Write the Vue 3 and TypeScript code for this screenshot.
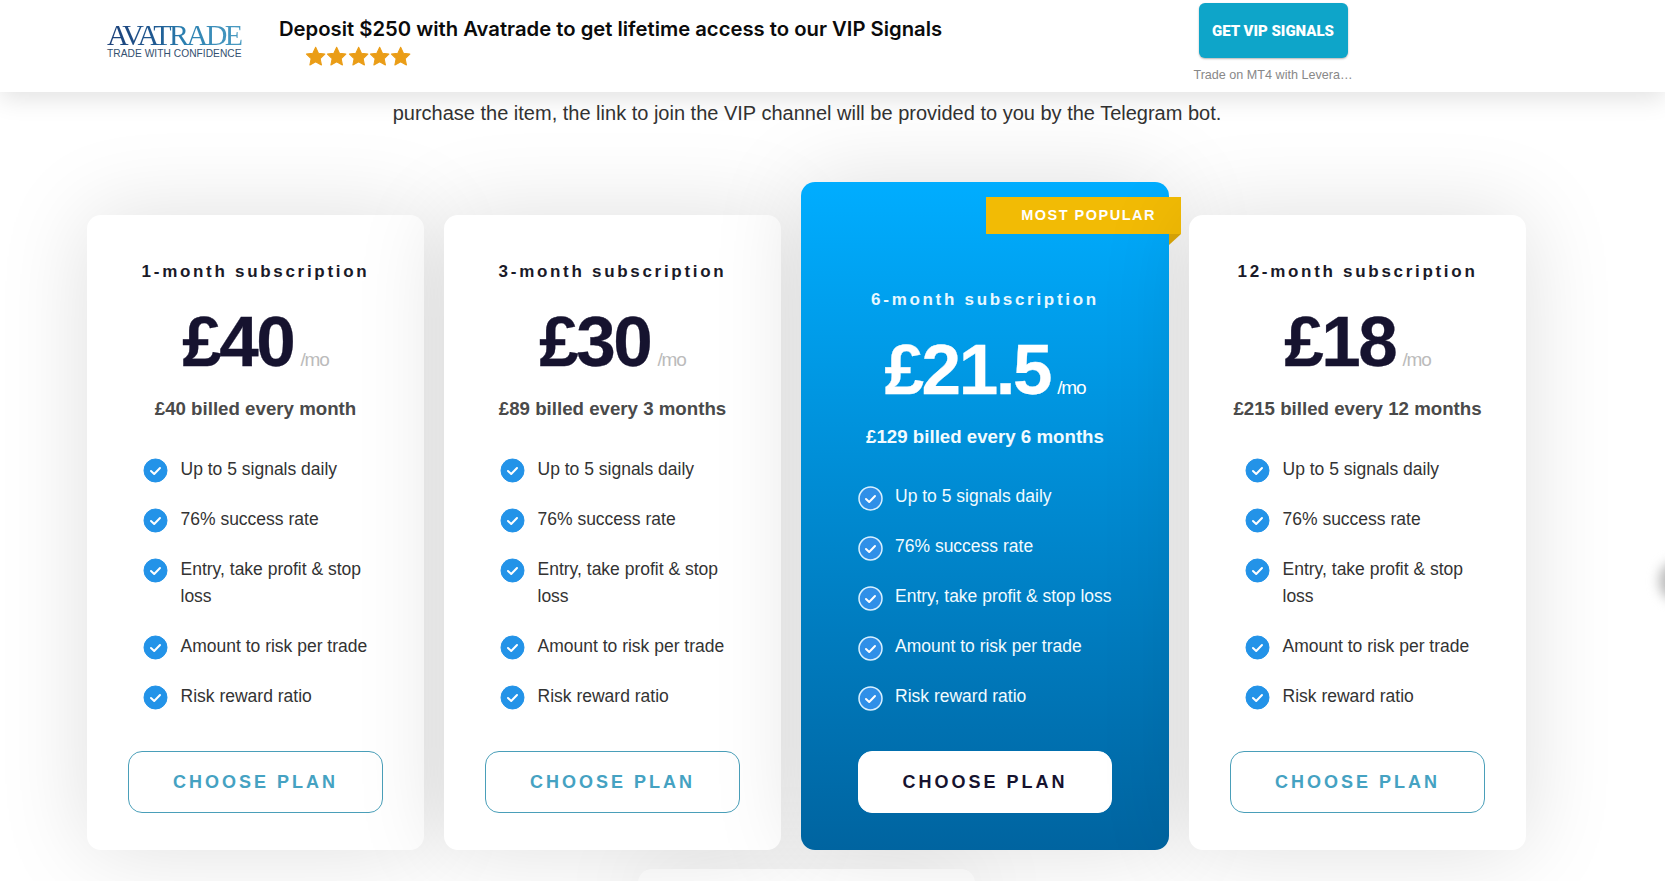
<script setup lang="ts">
interface Plan {
  name: string
  price: string
  billed: string
  featured?: boolean
}

const plans: Plan[] = [
  { name: '1-month subscription', price: '£40', billed: '£40 billed every month' },
  { name: '3-month subscription', price: '£30', billed: '£89 billed every 3 months' },
  { name: '6-month subscription', price: '£21.5', billed: '£129 billed every 6 months', featured: true },
  { name: '12-month subscription', price: '£18', billed: '£215 billed every 12 months' },
]

const features = [
  'Up to 5 signals daily',
  '76% success rate',
  'Entry, take profit & stop loss',
  'Amount to risk per trade',
  'Risk reward ratio',
]
</script>

<template>
  <div class="page">
    <header class="ad">
      <div class="logo">
        <div class="logo-name">AVATRADE</div>
        <div class="logo-tag">TRADE WITH CONFIDENCE</div>
      </div>
      <div class="pitch">
        <div class="headline">Deposit $250 with Avatrade to get lifetime access to our VIP Signals</div>
        <div class="stars">
          <svg v-for="n in 5" :key="n" class="star" viewBox="0 0 24 23">
            <path d="M12 1.500l3.200 6.800 7.400 1-5.400 5.100 1.400 7.400L12 18.300l-6.600 3.500 1.400-7.400-5.400-5.100 7.400-1z" fill="#ea9d17" stroke="#ea9d17" stroke-width="1.200" stroke-linejoin="round" />
          </svg>
        </div>
      </div>
      <div class="cta">
        <a class="cta-btn">GET VIP SIGNALS</a>
        <div class="cta-sub">Trade on MT4 with Levera…</div>
      </div>
    </header>

    <main class="content">
      <p class="intro">purchase the item, the link to join the VIP channel will be provided to you by the Telegram bot.</p>
      <section class="plans">
        <article v-for="plan in plans" :key="plan.name" class="card" :class="{ featured: plan.featured }">
          <div v-if="plan.featured" class="ribbon">MOST POPULAR</div>
          <h3 class="name">{{ plan.name }}</h3>
          <div class="price"><span class="amount">{{ plan.price }}</span><span class="per">/mo</span></div>
          <div class="billed">{{ plan.billed }}</div>
          <ul class="list">
            <li v-for="f in features" :key="f">
              <svg class="tick" viewBox="0 0 25 25">
                <circle cx="12.5" cy="12.500" r="11.500" class="disc" />
                <path d="M8 13l3.200 3 5.800-6" fill="none" stroke="#fff" stroke-width="2" stroke-linecap="round" stroke-linejoin="round" />
              </svg>
              <span>{{ f }}</span>
            </li>
          </ul>
          <a class="choose">CHOOSE PLAN</a>
        </article>
      </section>
      <div class="next-card"></div>
    </main>
    <div class="edge"></div>
  </div>
</template>

<style>
html, body { margin: 0; background: #fff; }
</style>

<style scoped>
.page {
  position: relative;
  height: 881px;
  overflow: hidden;
  background: #fff;
  font-family: "Liberation Sans", Arial, sans-serif;
}
.ad {
  position: relative;
  z-index: 3;
  box-sizing: border-box;
  height: 92px;
  background: #fff;
  box-shadow: 0 6px 24px rgba(0, 0, 0, 0.12);
  display: flex;
  padding-left: 107px;
}
.logo { width: 134px; padding-top: 21px; margin-right: 38px; }
.logo-name {
  width: 140px;
  font-family: "Liberation Serif", serif;
  font-size: 30px;
  line-height: 28px;
  letter-spacing: -2.550px;
  white-space: nowrap;
  background: linear-gradient(90deg, #1c3f78 0, #1f5a92 35%, #2a7fb0 55%, #4f9fc4 100%);
  -webkit-background-clip: text;
  background-clip: text;
  color: transparent;
}
.logo-tag { font-size: 10.200px; line-height: 12px; margin-top: -1px; color: #34506f; white-space: nowrap; letter-spacing: 0.050px; }
.pitch { width: 920px; padding-top: 16px; }
.headline { font-family: Inter, sans-serif; font-weight: 600; font-size: 20.250px; line-height: 26px; color: #0b0b0b; white-space: nowrap; }
.stars { display: flex; margin: 4px 0 0 26px; }
.star { width: 21.300px; height: 20px; }
.cta { display: flex; flex-direction: column; align-items: center; width: 158px; margin-left: -5px; padding-top: 3px; }
.cta-btn {
  width: 149px;
  height: 55px;
  border-radius: 6px;
  background: #0ea5c9;
  box-shadow: 0 1px 2px rgba(0, 0, 0, 0.3);
  color: #fff;
  font-family: Roboto, sans-serif;
  font-weight: 900;
  font-size: 15px;
  display: flex;
  align-items: center;
  justify-content: center;
}
.cta-sub { margin-top: 10px; font-size: 12.600px; line-height: 14px; color: #888; white-space: nowrap; }

.content { position: relative; }
.intro { margin: 8px 0 0; text-align: center; font-size: 20px; line-height: 26px; color: #333; height: 26px; padding-right: 51px; }
.plans {
  display: flex;
  align-items: flex-end;
  gap: 20px;
  margin: 56px 0 0 87px;
}
.card {
  position: relative;
  box-sizing: border-box;
  width: 337px;
  height: 635px;
  background: #fff;
  border-radius: 14px;
  box-shadow: 0 0 90px rgba(0, 0, 0, 0.13);
  padding: 45px 41px 0;
  text-align: center;
  color: #333;
}
.featured {
  width: 368px;
  height: 668px;
  padding: 106px 57px 0;
  background: linear-gradient(180deg, #00adff, #0064a0);
  color: #fff;
}
.ribbon {
  position: absolute;
  top: 15px;
  right: -12px;
  width: 195px;
  height: 37px;
  box-sizing: border-box;
  background: #f2bb05;
  color: #fff;
  font-weight: 700;
  font-size: 14.500px;
  line-height: 37px;
  letter-spacing: 1.500px;
  text-align: right;
  padding-right: 25px;
}
.ribbon::after {
  content: "";
  position: absolute;
  right: 0;
  top: 37px;
  border-top: 11px solid #d9a607;
  border-right: 12px solid transparent;
}
.name {
  margin: 0 -20px;
  font-size: 17px;
  line-height: 24px;
  font-weight: 700;
  letter-spacing: 2.700px;
  color: #1a1a28;
}
.featured .name { color: #e8f8ff; }
.price { margin-top: 18px; height: 80px; line-height: 80px; white-space: nowrap; text-align: center; }
.amount { font-weight: 700; font-size: 71px; letter-spacing: -2.400px; color: #16132f; -webkit-text-stroke: 0.300px currentColor; }
.featured .amount { color: #fff; }
.per { margin-left: 7px; font-size: 19px; letter-spacing: -1.100px; color: #bbb; }
.featured .per { color: #fff; }
.billed { margin: 14px -20px 0; font-size: 18.700px; line-height: 26px; font-weight: 700; color: #4a4a4a; }
.featured .billed { color: #f2fbff; }
.list { list-style: none; margin: 34px 0 0; padding: 0 0 0 15px; text-align: left; }
.featured .list { padding-left: 0; margin-top: 33px; margin-right: -20px; }
.list li { display: flex; align-items: flex-start; gap: 12.500px; font-size: 17.500px; line-height: 27px; margin-bottom: 23px; color: #333; }
.list li:last-child { margin-bottom: 0; }
.featured .list li { gap: 12px; color: #f2fbff; }
.tick { width: 25px; height: 25px; flex: none; margin: 2px 0 -2px; }
.featured .tick { margin: 3px 0 -3px; }
.disc { fill: #2393e8; stroke: #2393e8; stroke-width: 1; }
.featured .disc { fill: #2f8fe8; stroke: #d8f0ff; stroke-width: 1.500; }
.choose {
  position: absolute;
  left: 41px;
  right: 41px;
  bottom: 37px;
  height: 62px;
  box-sizing: border-box;
  border: 1px solid #4a9fb9;
  border-radius: 14px;
  font-weight: 700;
  font-size: 18px;
  letter-spacing: 3px;
  color: #45a2c2;
  display: flex;
  align-items: center;
  justify-content: center;
}
.featured .choose { left: 57px; right: 57px; background: #fff; border-color: #fff; color: #16132f; font-weight: 700; }
.next-card {
  width: 337px;
  height: 40px;
  margin: 19px 0 0 638px;
  background: #fff;
  border-radius: 14px 14px 0 0;
  box-shadow: 0 0 90px rgba(0, 0, 0, 0.13);
}
.edge {
  position: absolute;
  right: -24px;
  top: 562px;
  width: 30px;
  height: 38px;
  border-radius: 50%;
  background: #bbb;
  filter: blur(6px);
}
</style>
